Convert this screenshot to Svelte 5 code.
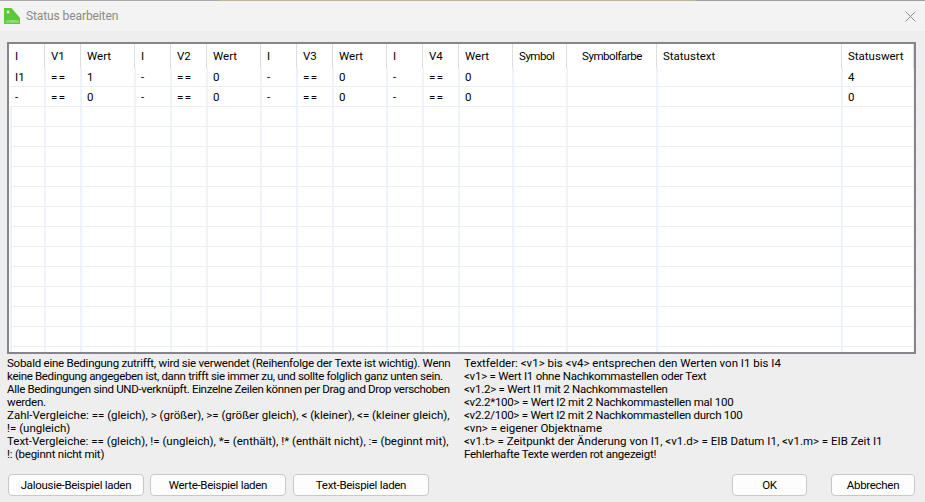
<script>
  const columns = [
    { label: 'I', width: 36 },
    { label: 'V1', width: 36 },
    { label: 'Wert', width: 54 },
    { label: 'I', width: 36 },
    { label: 'V2', width: 36 },
    { label: 'Wert', width: 54 },
    { label: 'I', width: 36 },
    { label: 'V3', width: 36 },
    { label: 'Wert', width: 54 },
    { label: 'I', width: 36 },
    { label: 'V4', width: 36 },
    { label: 'Wert', width: 54 },
    { label: 'Symbol', width: 54, tight: true },
    { label: 'Symbolfarbe', width: 90, tight: true, center: true },
    { label: 'Statustext', width: 185 },
    { label: 'Statuswert', width: 72 }
  ];

  const filled = [
    ['I1', '==', '1', '-', '==', '0', '-', '==', '0', '-', '==', '0', '', '', '', '4'],
    ['-', '==', '0', '-', '==', '0', '-', '==', '0', '-', '==', '0', '', '', '', '0']
  ];
  const empty = Array.from({ length: 13 }, () => columns.map(() => ''));
  const rows = [...filled, ...empty];

  const helpLeft = [
    { text: 'Sobald eine Bedingung zutrifft, wird sie verwendet (Reihenfolge der Texte ist wichtig). Wenn', fit: 'prose' },
    { text: 'keine Bedingung angegeben ist, dann trifft sie immer zu, und sollte folglich ganz unten sein.', fit: 'dense' },
    { text: 'Alle Bedingungen sind UND-verknüpft. Einzelne Zeilen können per Drag and Drop verschoben', fit: 'dense' },
    { text: 'werden.', fit: 'prose' },
    { text: 'Zahl-Vergleiche: == (gleich), > (größer), >= (größer gleich), < (kleiner), <= (kleiner gleich),', fit: '' },
    { text: '!= (ungleich)', fit: '' },
    { text: 'Text-Vergleiche: == (gleich), != (ungleich), *= (enthält), !* (enthält nicht), := (beginnt mit),', fit: '' },
    { text: '!: (beginnt nicht mit)', fit: 'prose' }
  ];
  const helpRight = [
    { text: 'Textfelder: <v1> bis <v4> entsprechen den Werten von I1 bis I4', fit: '' },
    { text: '<v1> = Wert I1 ohne Nachkommastellen oder Text', fit: 'prose' },
    { text: '<v1.2> = Wert I1 mit 2 Nachkommastellen', fit: 'prose' },
    { text: '<v2.2*100> = Wert I2 mit 2 Nachkommastellen mal 100', fit: 'prose' },
    { text: '<v2.2/100> = Wert I2 mit 2 Nachkommastellen durch 100', fit: 'prose' },
    { text: '<vn> = eigener Objektname', fit: '' },
    { text: '<v1.t> = Zeitpunkt der Änderung von I1, <v1.d> = EIB Datum I1, <v1.m> = EIB Zeit I1', fit: '' },
    { text: 'Fehlerhafte Texte werden rot angezeigt!', fit: 'prose' }
  ];
</script>

<div class="dialog">
  <header class="titlebar">
    <svg class="app-icon" width="16" height="16" viewBox="0 0 16 16">
      <path d="M0 0H7.5L16 10V16H0Z" fill="#5cc83c" />
      <circle cx="4" cy="4" r="1.4" fill="#e8f8e0" />
      <text x="8" y="14.6" font-size="3.4" text-anchor="middle" fill="#e8f8e0" font-family="Liberation Sans, sans-serif">CONFIG</text>
    </svg>
    <span class="title">Status bearbeiten</span>
    <svg class="close" width="11" height="11" viewBox="0 0 11 11">
      <path d="M0.5 0.5L10.5 10.5M10.5 0.5L0.5 10.5" stroke="#8c8c8c" stroke-width="1" fill="none" />
    </svg>
  </header>

  <main class="content">
    <div class="frame">
      <table>
        <colgroup>
          {#each columns as col}
            <col style="width: {col.width}px" />
          {/each}
        </colgroup>
        <thead>
          <tr>
            {#each columns as col}
              <th class:center={col.center} class:tight={col.tight}>{col.label}</th>
            {/each}
          </tr>
        </thead>
        <tbody>
          {#each rows as row, i}
            <tr class:blank={i >= filled.length}>
              {#each row as cell}
                <td class:op={cell === '=='}>{cell}</td>
              {/each}
            </tr>
          {/each}
        </tbody>
      </table>
    </div>

    <div class="help">
      <p class="left">
        {#each helpLeft as line}
          <span class={line.fit}>{line.text}</span>
        {/each}
      </p>
      <p class="right">
        {#each helpRight as line}
          <span class={line.fit}>{line.text}</span>
        {/each}
      </p>
    </div>

    <footer class="buttons">
      <button class="sample">Jalousie-Beispiel laden</button>
      <button class="sample">Werte-Beispiel laden</button>
      <button class="sample third">Text-Beispiel laden</button>
      <div class="spacer"></div>
      <button class="ok">OK</button>
      <button class="cancel">Abbrechen</button>
    </footer>
  </main>
</div>

<style>
  :global(body) {
    background: #eeeeee;
    font-family: Roboto, "Open Sans", sans-serif;
    font-size: 11.5px;
    color: #000000;
  }

  .dialog {
    width: 925px;
    height: 502px;
    display: flex;
    flex-direction: column;
    overflow: hidden;
  }

  .titlebar {
    height: 31px;
    flex: none;
    box-sizing: border-box;
    display: flex;
    align-items: center;
    padding: 1px 9px 0 4px;
    background:
      linear-gradient(to right, #a8a8ac 219px, #bdb88f 220px, #bdb88f 695px, #a0a0a0 696px) top / 100% 1px no-repeat,
      #f3f3f3;
  }

  .app-icon {
    flex: none;
    margin-right: 6px;
  }

  .title {
    color: #8a8a8a;
    font-size: 12px;
    letter-spacing: -0.1px;
    flex: 1;
  }

  .content {
    flex: 1;
    display: flex;
    flex-direction: column;
    padding: 11px 9px 0 7px;
    background: #eeeeee;
  }

  .frame {
    height: 312px;
    box-sizing: border-box;
    border: 2px solid #85858b;
    background: #ffffff;
    overflow: hidden;
  }

  table {
    table-layout: fixed;
    border-collapse: separate;
    border-spacing: 0;
    width: 905px;
    margin-left: 1px;
  }

  th {
    height: 24px;
    padding: 0 0 0 5px;
    box-sizing: border-box;
    text-align: left;
    font-weight: 400;
    background: #ffffff;
    box-shadow: inset -1px 0 0 #ffffff, inset -2px 0 0 #dcdcdc;
    white-space: nowrap;
  }

  th.center {
    text-align: center;
    padding: 0 2px 0 0;
  }

  th.tight {
    letter-spacing: -0.45px;
  }

  td {
    height: 20px;
    padding: 0 0 0 5px;
    box-sizing: border-box;
    border-right: 2px solid #eef3fb;
    border-bottom: 1px solid #eceff2;
    white-space: nowrap;
  }

  td.op {
    letter-spacing: 1.4px;
  }

  tbody tr:first-child td {
    height: 19px;
  }

  .blank td:first-child {
    box-shadow: inset 2px 0 0 #eef3fb;
  }

  .help {
    display: flex;
    margin-top: 3px;
    height: 105px;
    line-height: 13px;
  }

  .help p {
    margin: 0;
  }

  .help span {
    display: block;
    white-space: nowrap;
  }

  .help span.prose {
    letter-spacing: -0.24px;
  }

  .help span.dense {
    letter-spacing: -0.32px;
  }

  .left {
    width: 457px;
    flex: none;
  }

  .buttons {
    display: flex;
    margin-top: 12px;
    padding: 0 1px;
    gap: 6px;
  }

  .spacer {
    flex: 1;
  }

  button {
    height: 22px;
    box-sizing: border-box;
    padding: 0;
    font: inherit;
    letter-spacing: -0.3px;
    color: #000000;
    background: #fdfdfd;
    border: 1px solid #c8c8c8;
    border-radius: 4px;
  }

  .sample {
    width: 136px;
  }

  .third {
    margin-left: 1px;
  }

  .ok {
    width: 75px;
    margin-right: 18px;
  }

  .cancel {
    width: 84px;
  }
</style>
